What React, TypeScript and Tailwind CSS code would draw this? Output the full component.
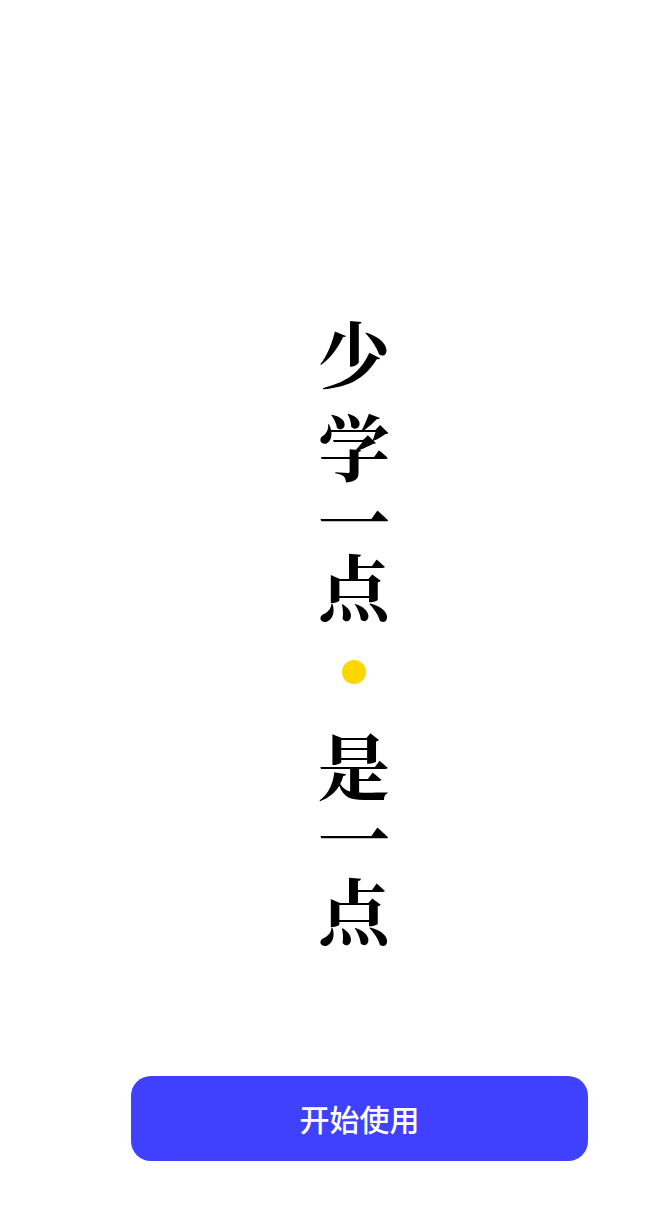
import React from "react";

const glyph =
  "text-[72px] leading-[66px] h-[66px] font-bold text-black [font-family:'Noto_Serif_CJK_SC','Noto_Serif_SC','Source_Han_Serif_SC','Noto_Sans_CJK_SC',serif]";

export default function App() {
  return (
    <div className="flex h-[1212px] w-full flex-col bg-white">
      <div className="ml-[319px] mt-[318px] flex w-[70px] flex-col items-center">
        <div className={glyph}>少</div>
        <div className={`${glyph} mt-[27px]`}>学</div>
        <div className={`${glyph} mt-[8px]`}>一</div>
        <div className={glyph}>点</div>
        <div className="mt-[43px] h-[24px] w-[24px] rounded-full bg-[#ffd600]" />
        <div className={`${glyph} mt-[46px]`}>是</div>
        <div className={`${glyph} mt-[6px]`}>一</div>
        <div className={`${glyph} mt-[7px]`}>点</div>
      </div>
      <button className="ml-[131px] mt-[135px] flex h-[85px] w-[457px] items-center justify-center rounded-[20px] bg-[#4040ff] text-[30px] font-medium text-white [font-family:'Noto_Sans_CJK_SC',sans-serif]">
        开始使用
      </button>
    </div>
  );
}
